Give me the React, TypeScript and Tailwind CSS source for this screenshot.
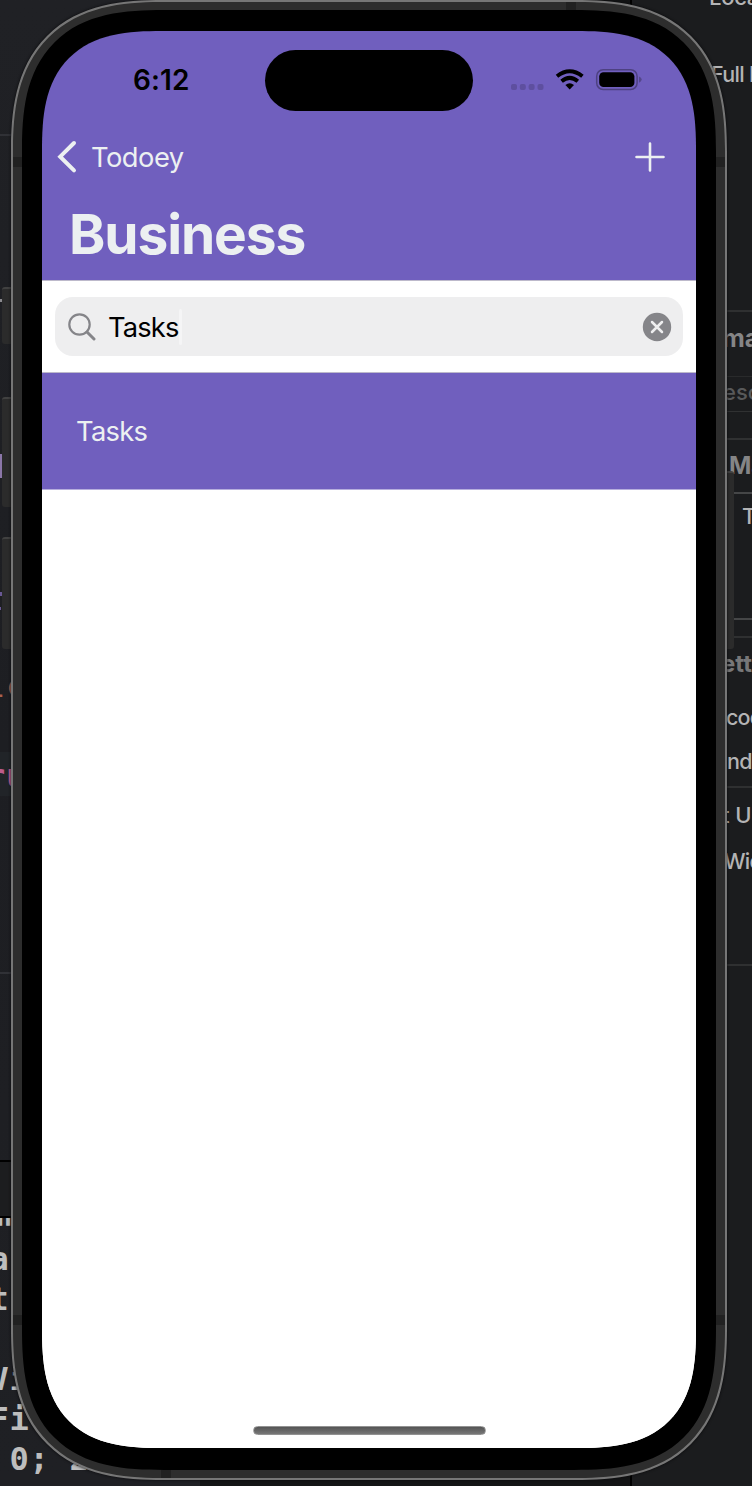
import React from "react";

const ui = "font-['Inter','Liberation_Sans',sans-serif]";
const mono = "font-['DejaVu_Sans_Mono','Liberation_Mono',monospace]";

function Label({ className, children }: { className: string; children: React.ReactNode }) {
  return <div className={`h-[22px] shrink-0 whitespace-pre leading-[22px] ${className}`}>{children}</div>;
}

function Rule({ className }: { className: string }) {
  return <div className={`shrink-0 ${className}`} />;
}

function EditorEdge() {
  return (
    <div className={`flex h-full w-[200px] flex-col overflow-hidden bg-gradient-to-b from-[#202125] via-[#1d1e22] to-[#1f2024] ${mono}`}>
      <Rule className="mt-[134px] h-[2px] bg-[#303136]" />
      <Rule className="mt-[163px] h-[3px] w-[3px] bg-[#8a8a8e]" />
      <Rule className="mt-[152px] h-[24px] w-[3px] bg-[#8b76a8]" />
      <Rule className="mt-[114px] h-[4px] w-[3px] bg-[#695894]" />
      <Rule className="mt-[11px] h-[3px] w-[1px] bg-[#695894]" />
      <div className="mt-[56px] ml-[-14px] h-[40px] shrink-0 text-[32px] leading-[40px] tracking-[0.7px] text-[#a9614f]">lc</div>
      <div className="mt-[46px] h-[44px] shrink-0 bg-[#212428]">
        <div className="ml-[-14px] text-[32px] leading-[48px] font-bold tracking-[1px] text-[#bd5c8b]">ru</div>
      </div>
      <Rule className="mt-[176px] h-[2px] bg-[#303136]" />
      <Rule className="mt-[186px] h-[2px] bg-black" />
      <Rule className="h-[54px] bg-[#1c1d1f]" />
      <Rule className="h-[2px] bg-black" />
      <div className="h-[268px] shrink-0 overflow-hidden">
        <div className="mt-[-19px] ml-[-9.5px] whitespace-pre text-[32px] leading-[40px] font-bold tracking-[0.74px] text-[#bdbdbd]">
          <div className="h-[40px] pt-[10px] pl-[4px]">"</div>
          <div className="ml-[-1px]">a</div>
          <div className="ml-[-1px]">t</div>
          <div className="h-[40px]" />
          <div className="ml-[-1px]">Vi</div>
          <div className="ml-[-1px]">Fi</div>
          <div className="ml-[-1px]"> 0; 2</div>
          <div className="ml-[118px]">0</div>
        </div>
      </div>
    </div>
  );
}

function InspectorEdge() {
  return (
    <div className={`flex h-full w-[122px] flex-col overflow-hidden border-l-2 border-black bg-[#1b1c1e] font-medium text-[#b4b4b5] ${ui}`}>
      <Label className="mt-[-14px] ml-[77px] text-[22px] tracking-[-0.3px]">Local</Label>
      <Label className="mt-[55px] ml-[79px] text-[21.5px] tracking-[-0.7px]">Full L</Label>
      <Rule className="mt-[225px] h-[2px] bg-[#2f3031]" />
      <Label className="mt-[15px] ml-[90px] text-[25px] font-bold text-[#858586]">mat</Label>
      <Rule className="mt-[27px] h-px bg-[#292a2b]" />
      <Label className="mt-[4px] ml-[91px] text-[22px] text-[#58595a]">esc</Label>
      <Rule className="mt-[8px] h-px bg-[#303132]" />
      <Rule className="mt-[26px] h-[2px] bg-[#303132]" />
      <Label className="mt-[15px] ml-[97px] text-[24px] font-bold text-[#858586]">Ma</Label>
      <Rule className="mt-[15px] h-[2px] bg-[#454647]" />
      <Label className="mt-[11px] ml-[110px] text-[22px]">Ta</Label>
      <Rule className="mt-[91px] h-[2px] bg-[#454647]" />
      <Rule className="mt-[16px] h-[2px] bg-[#2f3031]" />
      <Label className="mt-[15px] ml-[89px] text-[24px] font-bold text-[#777778]">etti</Label>
      <Label className="mt-[31px] ml-[94px] text-[21.5px] tracking-[-0.8px]">cod</Label>
      <Label className="mt-[22px] ml-[95px] text-[21.5px] tracking-[-0.8px]">nde</Label>
      <Rule className="mt-[14px] h-[2px] bg-[#2f3031]" />
      <Label className="mt-[16px] ml-[90px] text-[22px]">t U</Label>
      <Label className="mt-[24px] ml-[92px] text-[21.5px] tracking-[-0.8px]">Wid</Label>
      <Rule className="mt-[92px] h-[2px] bg-[#2f3031]" />
    </div>
  );
}

function StatusBar() {
  return (
    <div className="relative flex h-[98px] shrink-0 items-center text-black">
      <div className="ml-[91px] w-[70px] text-[28px] leading-[34px] font-semibold tracking-[0.1px]">6:12</div>
      <div className="ml-[62px] h-[61px] w-[208px] rounded-full bg-black" />
      <svg className="ml-[38px]" width="132" height="24" viewBox="0 0 132 24">
        <g fill="#5e4f9f">
          <rect x="0" y="16" width="6" height="6" rx="2" />
          <rect x="8.8" y="16" width="6" height="6" rx="2" />
          <rect x="17.6" y="16" width="6" height="6" rx="2" />
          <rect x="26.5" y="16" width="6" height="6" rx="2" />
        </g>
        <g fill="none" stroke="#000" strokeWidth="4">
          <path d="M46 8.3Q58.700-1.700 71.400 8.300" />
          <path d="M50.600 13.200Q58.700 6.600 66.800 13.200" />
        </g>
        <path d="M54.400 17Q58.700 13.500 63 17L58.700 21.600Z" fill="#000" />
        <rect x="85.700" y="1.700" width="40.400" height="19.800" rx="6.500" fill="none" stroke="#4d4181" strokeWidth="1.500" />
        <rect x="88.200" y="4.200" width="35.200" height="14.800" rx="4.300" fill="#000" />
        <path d="M128 8.600Q130.700 9.700 130.700 11.600T128 14.700Z" fill="#54478c" />
      </svg>
    </div>
  );
}

function NavBar() {
  return (
    <div className="flex h-[151px] shrink-0 flex-col text-[#ecf0f1]">
      <div className="flex h-[56px] items-center">
        <svg className="ml-[15px]" width="20" height="34" viewBox="0 0 20 34" fill="none" stroke="currentColor" strokeWidth="4" strokeLinecap="round" strokeLinejoin="miter">
          <path d="M17 3L3.200 16.700L17 30.400" />
        </svg>
        <div className="mt-[1px] ml-[14px] text-[27.3px] leading-[34px] tracking-[-0.5px]">Todoey</div>
        <svg className="mr-[31px] ml-auto" width="30" height="30" viewBox="0 0 30 30" fill="none" stroke="currentColor" strokeWidth="2.600" strokeLinecap="round">
          <path d="M15 1.500V28.500M1.500 15H28.500" />
        </svg>
      </div>
      <h1 className="mt-[16px] ml-[27px] text-[55px] leading-[66px] font-bold tracking-[-1.1px]">Business</h1>
    </div>
  );
}

function SearchBar() {
  return (
    <div className="flex h-[93px] shrink-0 items-center border-y border-[#bdb9cb] bg-white px-[13px]">
      <div className="flex h-[59px] w-full items-center rounded-[18px] bg-[#eeeeef]">
        <svg className="ml-[13px]" width="28" height="28" viewBox="0 0 28 28" fill="none" stroke="#858589" strokeLinecap="round">
          <circle cx="11.500" cy="11.500" r="10.200" strokeWidth="2.200" />
          <path d="M19 19L26 26" strokeWidth="3" />
        </svg>
        <div className="mt-[2px] ml-[12px] text-[27.3px] leading-[34px] tracking-[-0.85px] text-black">Tasks</div>
        <div className="h-[36px] w-[3px] rounded-full bg-[#f5f5f6]" />
        <svg className="mr-[11px] ml-auto" width="30" height="30" viewBox="0 0 30 30">
          <circle cx="15" cy="15" r="14.200" fill="#858589" />
          <path d="M10 10L20 20M20 10L10 20" stroke="#eeeeef" strokeWidth="2.500" strokeLinecap="round" />
        </svg>
      </div>
    </div>
  );
}

function Phone() {
  return (
    <div className="relative ml-[11px] h-[1480px] w-[716px]">
      <div className="absolute top-[287px] left-[-9px] h-[57px] w-[12px] rounded-l-[3px] border-t-2 border-[#414141] bg-[#2b2b2b]" />
      <div className="absolute top-[397px] left-[-9px] h-[110px] w-[12px] rounded-l-[3px] border-t-2 border-[#414141] bg-[#2b2b2b]" />
      <div className="absolute top-[537px] left-[-9px] h-[112px] w-[12px] rounded-l-[3px] border-t-2 border-[#414141] bg-[#2b2b2b]" />
      <div className="absolute top-[471px] right-[-7px] h-[178px] w-[10px] rounded-r-[3px] border-t-2 border-[#414141] bg-[#2b2b2b]" />
      <div className="relative h-full w-full rounded-[128px] border-2 border-[#767676] bg-[#2d2d2d] px-[9px] pt-[8px] pb-[8px] shadow-[0_0_3px_#08080a] supports-[corner-shape:squircle]:rounded-[152px] supports-[corner-shape:squircle]:[corner-shape:superellipse(1.36)]">
        <i className="absolute top-[155px] left-0 h-[10px] w-[9px] bg-[#212121]" />
        <i className="absolute top-[155px] right-0 h-[10px] w-[9px] bg-[#212121]" />
        <i className="absolute top-[1313px] left-0 h-[10px] w-[9px] bg-[#212121]" />
        <i className="absolute top-[1313px] right-0 h-[10px] w-[9px] bg-[#212121]" />
        <i className="absolute top-0 left-[553px] h-[8px] w-[10px] bg-[#212121]" />
        <i className="absolute bottom-0 left-[148px] h-[8px] w-[10px] bg-[#212121]" />
        <div className="relative h-full w-full rounded-[118px] bg-black px-[20px] pt-[21px] pb-[22px] supports-[corner-shape:squircle]:rounded-[142px] supports-[corner-shape:squircle]:[corner-shape:superellipse(1.42)]">
          <div className={`flex h-full w-full flex-col overflow-hidden rounded-[98px] bg-gradient-to-b from-[#705fbe] from-50% to-white to-50% supports-[corner-shape:squircle]:rounded-[120px] supports-[corner-shape:squircle]:[corner-shape:superellipse(1.44)] ${ui}`}>
            <StatusBar />
            <NavBar />
            <SearchBar />
            <div className="flex h-[117px] shrink-0 items-center border-b border-[#b6aedd] bg-[#705fbe] pt-[2px] pl-[34px] text-[27.3px] leading-[34px] tracking-[-0.7px] text-[#ecf0f1]">Tasks</div>
            <div className="flex flex-1 items-end justify-center bg-white pb-[13px]">
              <div className="h-[9px] w-[233px] rounded-full border border-[#929292] bg-gradient-to-b from-[#555] to-[#777]" />
            </div>
          </div>
        </div>
      </div>
    </div>
  );
}

export default function App() {
  return (
    <main className="relative h-[1486px] w-[752px] overflow-hidden bg-[#131415]">
      <div className="absolute inset-0 flex justify-between">
        <EditorEdge />
        <InspectorEdge />
      </div>
      <Phone />
    </main>
  );
}
